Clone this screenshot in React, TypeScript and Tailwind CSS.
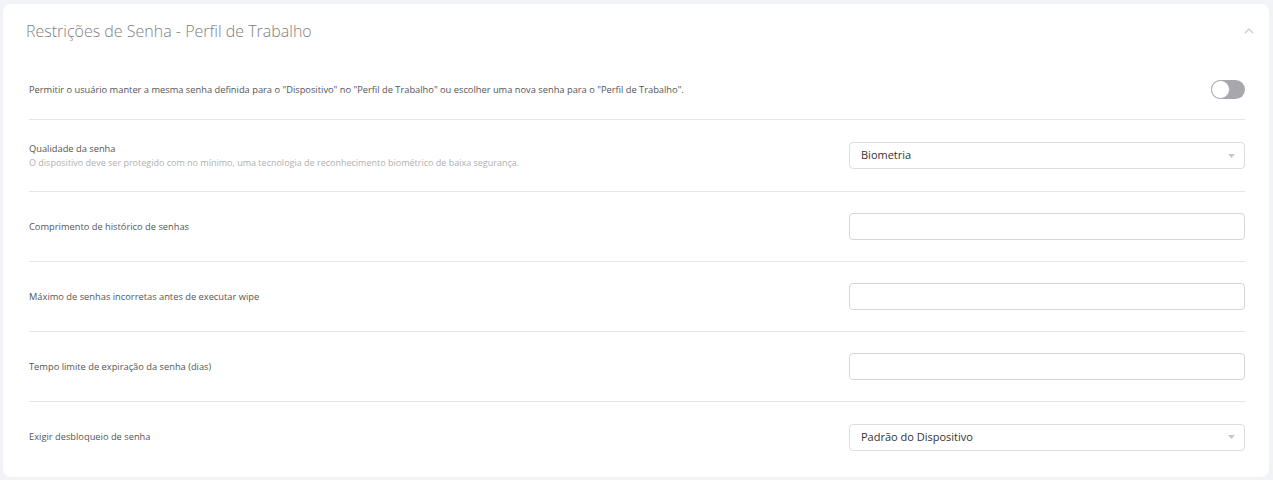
import { ChevronUp } from 'lucide-react';

function Caret() {
  return (
    <svg width="7" height="4" viewBox="0 0 7 4" className="shrink-0">
      <path d="M0 0h7L3.5 4z" fill="#c8c8c8" />
    </svg>
  );
}

function SelectBox({ value }: { value: string }) {
  return (
    <div className="w-[396px] h-[27px] border border-[#dedede] rounded-[4px] bg-white flex items-center justify-between pl-[11px] pr-[9px]">
      <span className="text-[11px] text-[#333]">{value}</span>
      <Caret />
    </div>
  );
}

function TextBox() {
  return <div className="w-[396px] h-[27px] border border-[#d6d6d6] rounded-[4px] bg-white" />;
}

function Row({
  label,
  hint,
  children,
  last,
  height = 'h-[70px]',
}: {
  label: string;
  hint?: string;
  children: React.ReactNode;
  last?: boolean;
  height?: string;
}) {
  return (
    <div className={`${height} flex items-center justify-between ${last ? '' : 'border-b border-[#e6e6e6]'}`}>
      <div className="flex flex-col">
        <span className="text-[9.3px] text-[#555] leading-[14px]">{label}</span>
        {hint && <span className="text-[9px] text-[#b0b0b0] leading-[14px]">{hint}</span>}
      </div>
      {children}
    </div>
  );
}

export default function App() {
  return (
    <div
      className="min-h-[480px] bg-[#f2f3f7] pt-[4px] pl-[3px] pr-[4px] pb-[3px]"
      style={{ fontFamily: '"Open Sans", sans-serif' }}
    >
      <div className="bg-white rounded-[8px] pb-[5px]">
        <div className="h-[56px] flex items-center justify-between pl-[23px] pr-[12px]">
          <h1 className="text-[16px] font-light text-[#808080] -mt-[2px]">
            Restrições de Senha - Perfil de Trabalho
          </h1>
          <ChevronUp size={16} strokeWidth={1.6} className="text-[#c8c8c8] -mt-[3px]" />
        </div>
        <div className="pl-[26px] pr-[24px]">
          <Row
            height="h-[60px]"
            label={'Permitir o usuário manter a mesma senha definida para o "Dispositivo" no "Perfil de Trabalho" ou escolher uma nova senha para o "Perfil de Trabalho".'}
          >
            <div className="w-[34px] h-[19px] rounded-full bg-[#a7a7ad] relative">
              <div className="absolute left-0 top-0 w-[19px] h-[19px] rounded-full bg-white border border-[#b0b0b6]" />
            </div>
          </Row>
          <Row
            height="h-[72px]"
            label="Qualidade da senha"
            hint="O dispositivo deve ser protegido com no mínimo, uma tecnologia de reconhecimento biométrico de baixa segurança."
          >
            <SelectBox value="Biometria" />
          </Row>
          <Row label="Comprimento de histórico de senhas">
            <TextBox />
          </Row>
          <Row label="Máximo de senhas incorretas antes de executar wipe">
            <TextBox />
          </Row>
          <Row label="Tempo limite de expiração da senha (dias)">
            <TextBox />
          </Row>
          <Row label="Exigir desbloqueio de senha" last>
            <SelectBox value="Padrão do Dispositivo" />
          </Row>
        </div>
      </div>
    </div>
  );
}
